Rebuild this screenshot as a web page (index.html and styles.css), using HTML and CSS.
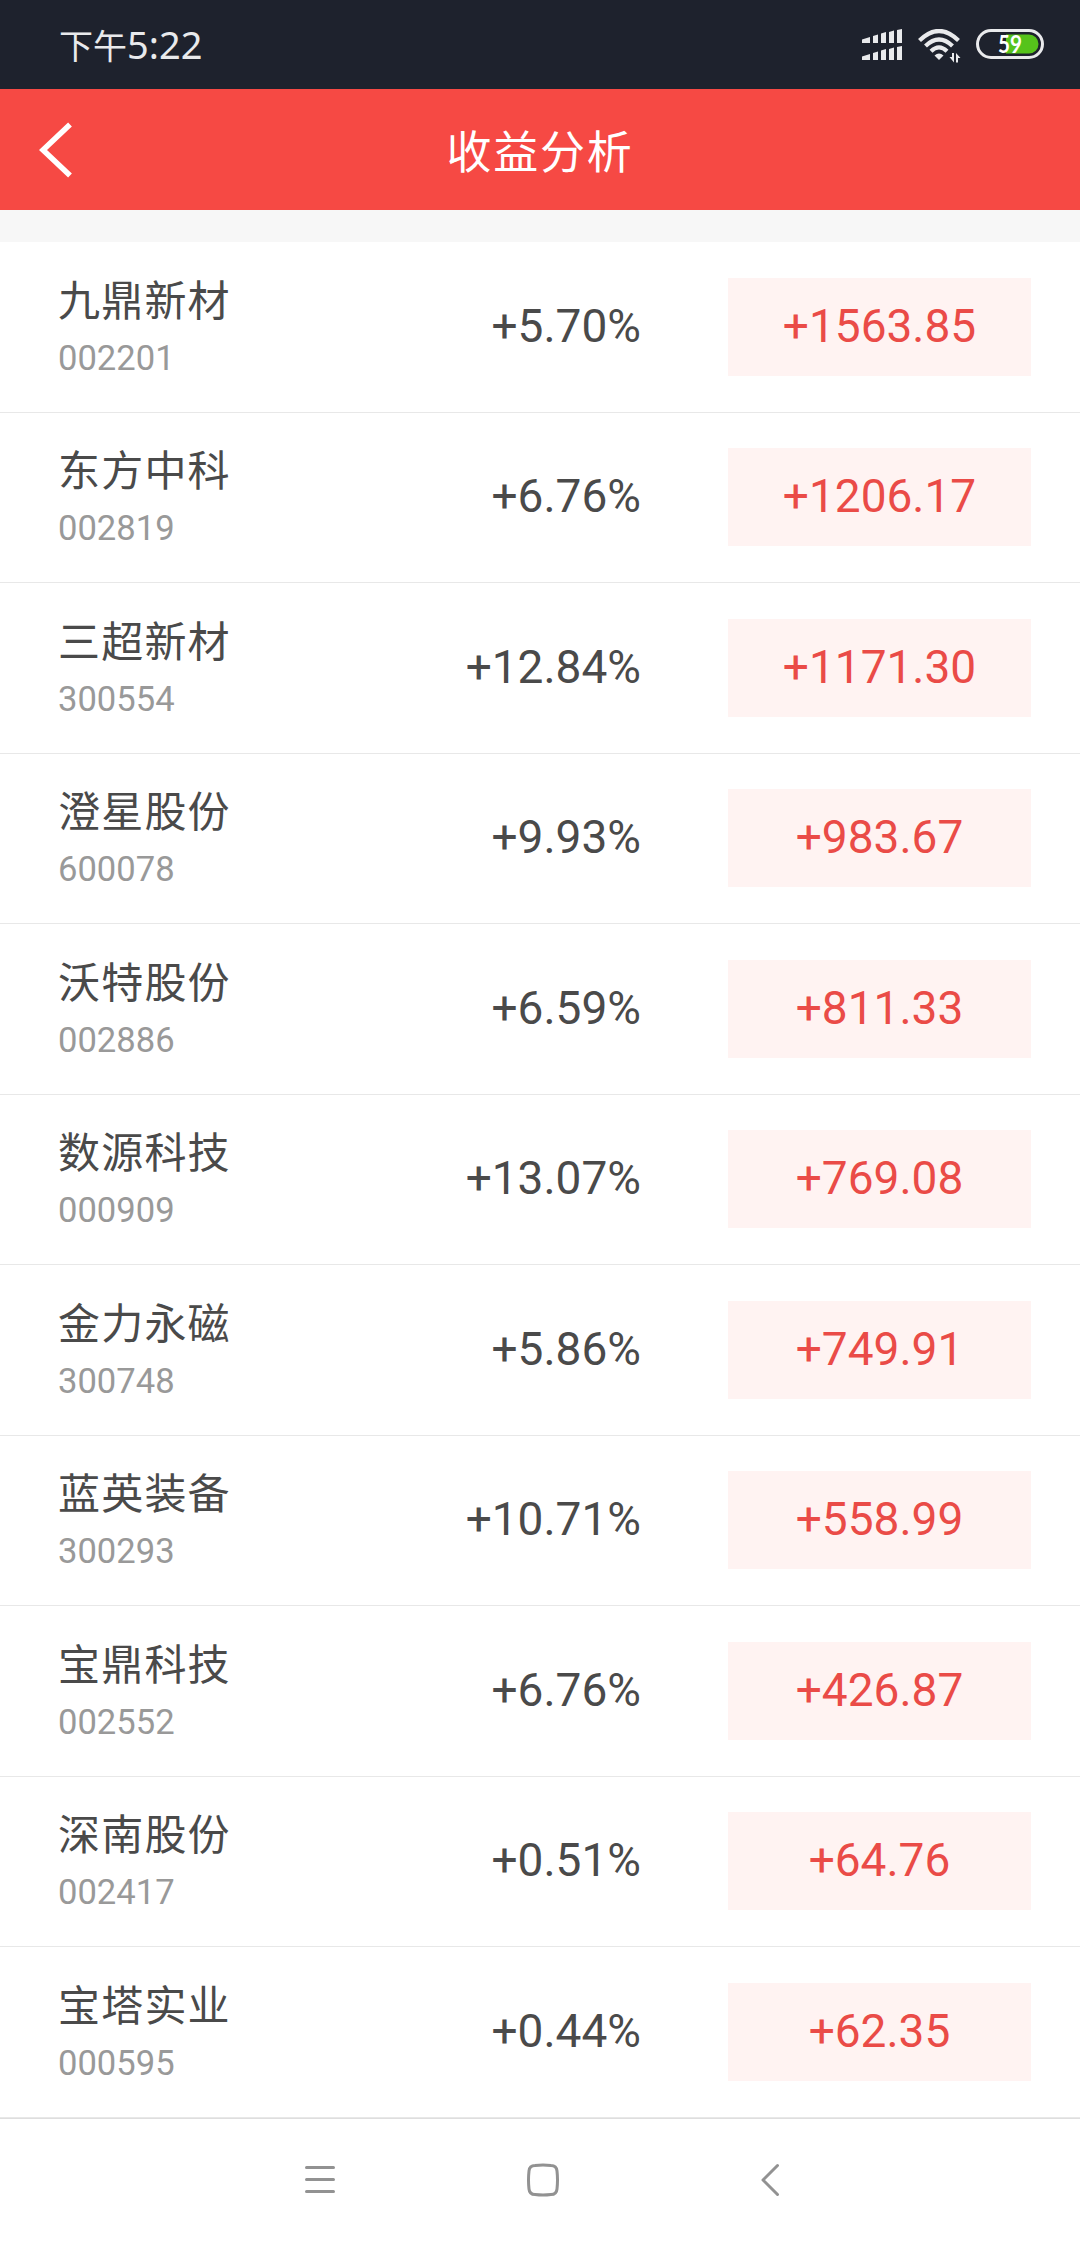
FILE: index.html
```html
<!DOCTYPE html>
<html lang="zh-CN">

<head>
    <meta charset="UTF-8">
    <meta name="viewport" content="width=device-width, initial-scale=1.0">
    <title>收益分析</title>
    <link rel="stylesheet" href="styles.css">
</head>

<body>
    <div class="status">
        <div class="time"><span class="ampm">下午</span><span>5:22</span></div>
        <div class="status-icons">
            <svg class="signal" width="40" height="31" viewBox="0 0 40 31" fill="#e9eaec">
                <path d="M0 10.5L8 8V14H0zM11 7L16 5.5V14H11zM19 4.5L24 3V14H19zM27 3L32 1.5V14H27zM35 1L40 0V14H35z" />
                <path d="M0 27.5L8 25V31H0zM11 24L16 22.5V31H11zM19 21.5L24 20V31H19zM27 20L32 18.5V31H27zM35 18L40 17V31H35z" />
            </svg>
            <svg class="wifi" width="44" height="34" viewBox="0 0 44 34">
                <g fill="none" stroke="#e9eaec" stroke-width="4.2">
                    <path d="M1.5 11.5Q21 -7.5 40.5 11.5" />
                    <path d="M7.500 17Q21 4 34.5 17" />
                    <path d="M13 22.300Q21 14.500 29 22.300" />
                </g>
                <path d="M16.500 26.500Q21 22.500 25.500 26.500L21 31z" fill="#e9eaec" />
                <path d="M31.500 28H34V24H36V33.500zM38 33.500V24L42.500 29H40V33.500z" fill="#e9eaec" />
            </svg>
            <svg class="battery" width="68" height="30" viewBox="0 0 68 30">
                <rect x="1.500" y="1.500" width="65" height="27" rx="13.500" fill="none" stroke="#e9eaec" stroke-width="3" />
                <path d="M30 5.500H53A9.500 9.500 0 0 1 53 24.500H30z" fill="#56c31b" />
                <text class="level" x="34" y="24" text-anchor="middle" textLength="24" lengthAdjust="spacingAndGlyphs">59</text>
            </svg>
        </div>
    </div>

    <header>
        <svg class="back" width="34" height="56" viewBox="0 0 34 56" fill="none" stroke="#fff" stroke-width="5.500">
            <path d="M31 2.500L4 28L31 53.500" />
        </svg>
        <h1>收益分析</h1>
    </header>

    <main>
        <div class="row">
            <div class="stock"><div class="name">九鼎新材</div><div class="code">002201</div></div>
            <div class="rate">+5.70%</div>
            <div class="profit">+1563.85</div>
        </div>
        <div class="row">
            <div class="stock"><div class="name">东方中科</div><div class="code">002819</div></div>
            <div class="rate">+6.76%</div>
            <div class="profit">+1206.17</div>
        </div>
        <div class="row">
            <div class="stock"><div class="name">三超新材</div><div class="code">300554</div></div>
            <div class="rate">+12.84%</div>
            <div class="profit">+1171.30</div>
        </div>
        <div class="row">
            <div class="stock"><div class="name">澄星股份</div><div class="code">600078</div></div>
            <div class="rate">+9.93%</div>
            <div class="profit">+983.67</div>
        </div>
        <div class="row">
            <div class="stock"><div class="name">沃特股份</div><div class="code">002886</div></div>
            <div class="rate">+6.59%</div>
            <div class="profit">+811.33</div>
        </div>
        <div class="row">
            <div class="stock"><div class="name">数源科技</div><div class="code">000909</div></div>
            <div class="rate">+13.07%</div>
            <div class="profit">+769.08</div>
        </div>
        <div class="row">
            <div class="stock"><div class="name">金力永磁</div><div class="code">300748</div></div>
            <div class="rate">+5.86%</div>
            <div class="profit">+749.91</div>
        </div>
        <div class="row">
            <div class="stock"><div class="name">蓝英装备</div><div class="code">300293</div></div>
            <div class="rate">+10.71%</div>
            <div class="profit">+558.99</div>
        </div>
        <div class="row">
            <div class="stock"><div class="name">宝鼎科技</div><div class="code">002552</div></div>
            <div class="rate">+6.76%</div>
            <div class="profit">+426.87</div>
        </div>
        <div class="row">
            <div class="stock"><div class="name">深南股份</div><div class="code">002417</div></div>
            <div class="rate">+0.51%</div>
            <div class="profit">+64.76</div>
        </div>
        <div class="row">
            <div class="stock"><div class="name">宝塔实业</div><div class="code">000595</div></div>
            <div class="rate">+0.44%</div>
            <div class="profit">+62.35</div>
        </div>
    </main>

    <nav>
        <svg class="menu" width="32" height="34" viewBox="0 0 32 34">
            <path d="M2.500 4.500H29.500M2.500 16.500H29.500M2.500 28.500H29.500" />
        </svg>
        <svg class="home" width="32" height="34" viewBox="0 0 32 34">
            <path d="M8 2.500Q16 1.500 24 2.500Q29.500 2.500 30 8Q31 17 30 26Q29.500 31.500 24 31.500Q16 32.500 8 31.500Q2.500 31.500 2 26Q1 17 2 8Q2.500 2.500 8 2.500z" />
        </svg>
        <svg class="return" width="20" height="34" viewBox="0 0 20 34">
            <path d="M17.500 2.500L3 17L17.500 31.500" />
        </svg>
    </nav>
</body>

</html>
```

FILE: styles.css
```css
html,
body {
    height: 100%;
    margin: 0;
}

body {
    background: #f7f7f7;
    font-family: Roboto, "Noto Sans CJK SC", sans-serif;
    color: #4a4a4a;
    overflow: hidden;
}

.status {
    height: 89px;
    box-sizing: border-box;
    padding: 0 36px 0 59px;
    background: #1e222d;
    color: #e9eaec;
    display: flex;
    justify-content: space-between;
}

.time {
    font-family: "Noto Sans", "Noto Sans CJK SC", sans-serif;
    font-size: 38px;
    line-height: 89px;
}

.ampm {
    font-family: "Noto Sans CJK SC", sans-serif;
    font-size: 34px;
}

.status-icons {
    display: flex;
    align-items: flex-start;
    padding-top: 29px;
}

.wifi {
    margin: 0 14px 0 16px;
}

.level {
    font-family: Lato, sans-serif;
    font-size: 25px;
    font-weight: 700;
    fill: #fff;
}

header {
    height: 121px;
    background: #f64944;
    color: #fff;
    display: grid;
    grid-template-columns: 120px 1fr 120px;
    align-items: center;
}

.back {
    margin-left: 39px;
}

h1 {
    margin: 0;
    font-size: 45px;
    font-weight: 400;
    letter-spacing: 1.7px;
    text-align: center;
}

main {
    margin-top: 32px;
    height: 1876px;
    background: #fff;
}

.row {
    height: 170.5px;
    box-sizing: border-box;
    border-bottom: 1px solid #e8e8e8;
    padding: 0 49px 0 58px;
    display: grid;
    grid-template-columns: 300px 370px 303px;
    align-items: center;
}

.stock {
    padding-top: 2px;
}

.name {
    font-size: 42px;
    line-height: 60px;
    letter-spacing: 1.2px;
}

.code {
    font-size: 34.6px;
    line-height: 52px;
    color: #999;
}

.rate {
    padding: 0 87px 2px 0;
    font-size: 46px;
    text-align: right;
}

.profit {
    height: 98px;
    line-height: 97px;
    background: #fff3f2;
    color: #ea4b47;
    font-size: 46px;
    text-align: center;
}

nav {
    height: 130px;
    box-sizing: border-box;
    border-top: 1px solid #dedede;
    background: #fff;
    padding: 44px 0 0 304px;
    display: flex;
    align-items: flex-start;
}

nav path {
    fill: none;
    stroke: #929292;
    stroke-width: 3;
    stroke-linecap: round;
    stroke-linejoin: round;
}

.home {
    margin-left: 191px;
}

.return {
    margin-left: 201px;
}
```
